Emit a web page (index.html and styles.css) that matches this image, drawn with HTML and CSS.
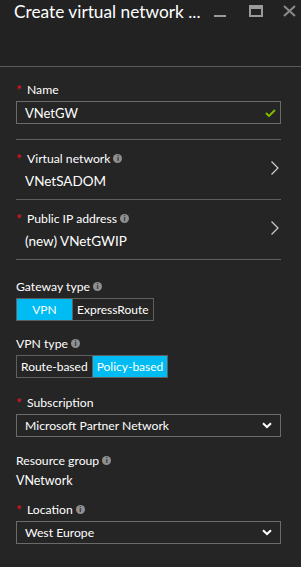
FILE: index.html
```html
<!DOCTYPE html>
<html>
<head>
<meta charset="utf-8">
<link rel="stylesheet" href="styles.css">
</head>
<body>
<div class="blade">
  <div class="header">
    <div class="title">Create virtual network ...</div>
    <div class="controls">
      <svg class="ctl" width="13" height="12" viewBox="0 0 13 12"><rect x="0" y="10" width="12" height="2" fill="#9a9a9a"/></svg>
      <svg class="ctl" width="14" height="12" viewBox="0 0 14 12"><rect x="1" y="1" width="12" height="10" fill="none" stroke="#9a9a9a" stroke-width="2"/><rect x="1" y="1" width="12" height="3" fill="#9a9a9a"/></svg>
      <svg class="ctl" width="13" height="12" viewBox="0 0 13 12"><path d="M1 1 L12 11 M12 1 L1 11" stroke="#8a8a8a" stroke-width="2"/></svg>
    </div>
  </div>
  <div class="form">
    <div class="field first">
      <div class="label"><span class="req">*</span>Name</div>
      <div class="input">
        <span class="val">VNetGW</span>
        <svg width="11" height="8" viewBox="0 0 11 8"><path d="M1 4 L4 7 L10 1" fill="none" stroke="#7fba00" stroke-width="2"/></svg>
      </div>
    </div>
    <div class="sep"></div>
    <div class="nav">
      <div class="navtext">
        <div class="label"><span class="req">*</span>Virtual network<span class="info">i</span></div>
        <div class="value">VNetSADOM</div>
      </div>
      <svg class="chev" width="8" height="14" viewBox="0 0 8 14"><path d="M0.5 0.5 L7 7 L0.5 13.5" fill="none" stroke="#d0d0d0" stroke-width="1.2"/></svg>
    </div>
    <div class="sep"></div>
    <div class="nav">
      <div class="navtext">
        <div class="label"><span class="req">*</span>Public IP address<span class="info">i</span></div>
        <div class="value">(new) VNetGWIP</div>
      </div>
      <svg class="chev" width="8" height="14" viewBox="0 0 8 14"><path d="M0.5 0.5 L7 7 L0.5 13.5" fill="none" stroke="#d0d0d0" stroke-width="1.2"/></svg>
    </div>
    <div class="sep"></div>
    <div class="field gw">
      <div class="label">Gateway type<span class="info">i</span></div>
      <div class="toggle">
        <span class="opt on w-vpn">VPN</span><span class="opt">ExpressRoute</span>
      </div>
    </div>
    <div class="field vpn">
      <div class="label">VPN type<span class="info">i</span></div>
      <div class="toggle">
        <span class="opt">Route-based</span><span class="opt on">Policy-based</span>
      </div>
    </div>
    <div class="field sub">
      <div class="label"><span class="req">*</span>Subscription</div>
      <div class="select">
        <span class="val">Microsoft Partner Network</span>
        <svg width="10" height="7" viewBox="0 0 10 7"><path d="M1 1.2 L5 5 L9 1.2" fill="none" stroke="#fff" stroke-width="2"/></svg>
      </div>
    </div>
    <div class="field rg">
      <div class="label">Resource group<span class="info">i</span></div>
      <div class="plain">VNetwork</div>
    </div>
    <div class="field loc">
      <div class="label"><span class="req">*</span>Location<span class="info">i</span></div>
      <div class="select">
        <span class="val">West Europe</span>
        <svg width="10" height="7" viewBox="0 0 10 7"><path d="M1 1.2 L5 5 L9 1.2" fill="none" stroke="#fff" stroke-width="2"/></svg>
      </div>
    </div>
  </div>
</div>
</body>
</html>
```
FILE: styles.css
```css
html, body {
  margin: 0;
  padding: 0;
  background: #252525;
}
body {
  font-family: Lato, "Liberation Sans", sans-serif;
  color: #ffffff;
  width: 301px;
  height: 567px;
  overflow: hidden;
}
.blade {
  background: #252525;
  height: 567px;
}
.header {
  height: 66px;
  background: #222222;
  border-bottom: 1px solid #5a5a5a;
  display: flex;
  align-items: flex-start;
  justify-content: space-between;
  padding: 0 5px 0 14px;
}
.title {
  font-size: 17.3px;
  line-height: 22px;
  margin-top: 1px;
  color: #ffffff;
  white-space: nowrap;
}
.controls {
  display: flex;
  margin-top: 5px;
}
.ctl { display: block; }
.controls .ctl:nth-child(1) { margin-right: 22px; }
.controls .ctl:nth-child(2) { margin-right: 20px; }
.form {
  padding: 0 20px 0 16px;
}
.label {
  font-size: 12.2px;
  line-height: 16px;
  display: flex;
  align-items: center;
  white-space: nowrap;
}
.req {
  color: #e81123;
  font-size: 14px;
  margin-right: 5px;
  width: 6px;
  display: inline-block;
  line-height: 12px;
  align-self: flex-start;
  margin-top: 2px;
}
.info {
  display: inline-block;
  width: 9px;
  height: 9px;
  border-radius: 50%;
  background: #8f8f8f;
  color: #2a2a2a;
  font-size: 8px;
  line-height: 9px;
  text-align: center;
  font-weight: bold;
  margin-left: 3px;
  margin-top: -2px;
}
.field.first { padding-top: 15px; }
.input, .select {
  box-sizing: border-box;
  height: 23px;
  border: 1px solid #6a6a6a;
  margin-top: 3px;
  display: flex;
  align-items: center;
  justify-content: space-between;
  padding: 0 8px 0 8px;
}
.input .val, .select .val {
  font-size: 12.2px;
}
.input .val { font-size: 13px; }
.input svg { margin-right: -4px; }
.sep {
  height: 1px;
  background: #5f5f5f;
}
.field.first + .sep { margin-top: 15px; }
.nav {
  height: 59px;
  display: flex;
  align-items: flex-start;
  justify-content: space-between;
}
.navtext { padding-top: 11px; }
.value {
  font-size: 13.5px;
  line-height: 18px;
  margin-top: 5px;
  padding-left: 9px;
}
.chev { margin-right: 2px; align-self: center; margin-top: -4px; }
.field.gw { padding-top: 19px; }
.toggle {
  display: inline-flex;
  margin-top: 3px;
  border: 1px solid #5f5f5f;
  height: 23px;
  box-sizing: border-box;
}
.opt {
  font-size: 12px;
  line-height: 21px;
  padding: 0 4px;
  color: #ffffff;
}
.opt + .opt { border-left: 1px solid #5f5f5f; }
.opt.on { background: #00bcf2; }
.w-vpn { width: 55px; box-sizing: border-box; text-align: center; }
.field.vpn { padding-top: 15px; }
.field.sub { padding-top: 17px; }
.field.rg { padding-top: 16px; }
.plain { font-size: 12.5px; line-height: 16px; margin-top: 4px; }
.field.loc { padding-top: 13px; }
```
